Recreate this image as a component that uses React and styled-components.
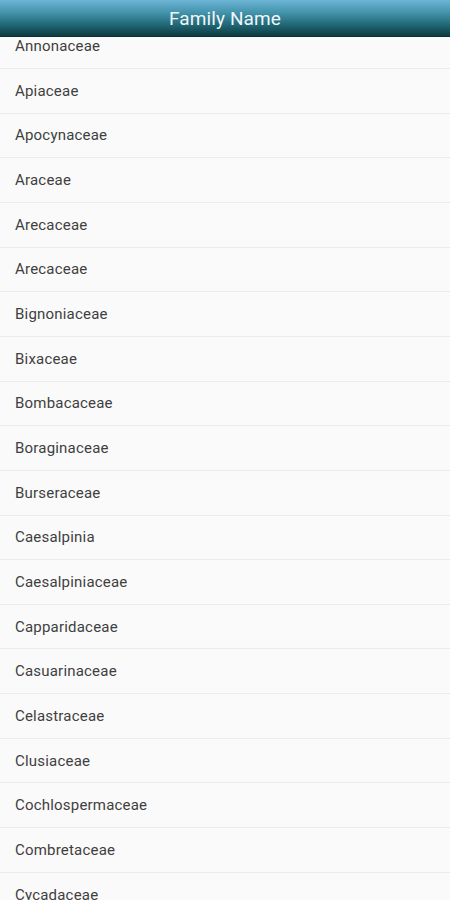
import React from "react";
import styled, { createGlobalStyle } from "styled-components";

const Global = createGlobalStyle`
  html, body { margin: 0; padding: 0; background: #fafafa; }
  body { font-family: Roboto, "Liberation Sans", Arial, sans-serif; overflow: hidden; }
  * { box-sizing: border-box; }
`;

const Page = styled.div`
  width: 450px;
  height: 900px;
  overflow: hidden;
  position: relative;
  background: #fafafa;
`;

const Header = styled.header`
  position: absolute;
  top: 0;
  left: 0;
  right: 0;
  height: 37px;
  z-index: 2;
  display: flex;
  align-items: center;
  justify-content: center;
  background: linear-gradient(to bottom, #6db4d6 0%, #4393ab 35%, #206674 70%, #0c3a40 100%);
  border-bottom: 1px solid #0a2e33;
`;

const Title = styled.h1`
  margin: 0;
  font-size: 19px;
  font-weight: 400;
  color: #eef6f8;
  letter-spacing: 0.1px;
`;

const List = styled.ul`
  list-style: none;
  margin: 0;
  padding: 24.3px 0 0;
`;

const Row = styled.li`
  height: 44.67px;
  display: flex;
  align-items: center;
  padding-left: 15px;
  border-bottom: 1.3px solid #ebebeb;
  font-size: 15px;
  letter-spacing: 0.2px;
  color: #3f3f3f;
`;

const names = [
  "Annonaceae",
  "Apiaceae",
  "Apocynaceae",
  "Araceae",
  "Arecaceae",
  "Arecaceae",
  "Bignoniaceae",
  "Bixaceae",
  "Bombacaceae",
  "Boraginaceae",
  "Burseraceae",
  "Caesalpinia",
  "Caesalpiniaceae",
  "Capparidaceae",
  "Casuarinaceae",
  "Celastraceae",
  "Clusiaceae",
  "Cochlospermaceae",
  "Combretaceae",
  "Cycadaceae",
  "Dilleniaceae",
];

export default function App() {
  return (
    <Page>
      <Global />
      <Header>
        <Title>Family Name</Title>
      </Header>
      <List>
        {names.map((n, i) => (
          <Row key={i}>{n}</Row>
        ))}
      </List>
    </Page>
  );
}
